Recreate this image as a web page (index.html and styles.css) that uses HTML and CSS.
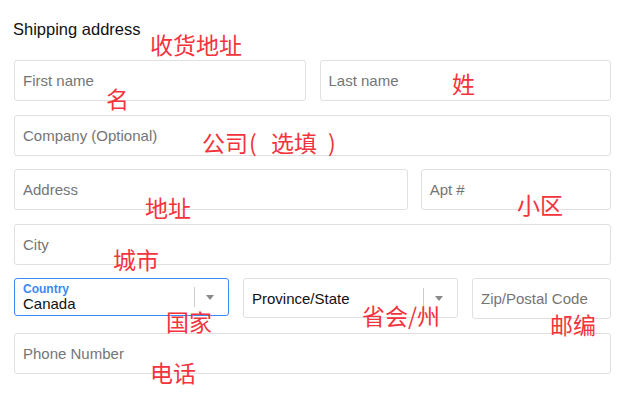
FILE: index.html
```html
<!DOCTYPE html>
<html lang="en">
<head>
    <meta charset="UTF-8">
    <meta name="viewport" content="width=device-width, initial-scale=1.0">
    <title>Shipping address</title>
    <link rel="stylesheet" href="styles.css">
</head>
<body>
    <div class="form">
        <h2 class="title">Shipping address</h2>

        <div class="row two">
            <div class="field">First name</div>
            <div class="field">Last name</div>
        </div>
        <div class="row">
            <div class="field">Company (Optional)</div>
        </div>
        <div class="row address">
            <div class="field">Address</div>
            <div class="field">Apt #</div>
        </div>
        <div class="row">
            <div class="field">City</div>
        </div>
        <div class="row region">
            <div class="select active">
                <div class="select-value">
                    <span class="select-label">Country</span>
                    <span>Canada</span>
                </div>
                <span class="sep"></span>
                <span class="arrow"></span>
            </div>
            <div class="select tall">
                <div class="select-value">
                    <span>Province/State</span>
                </div>
                <span class="sep"></span>
                <span class="arrow"></span>
            </div>
            <div class="field">Zip/Postal Code</div>
        </div>
        <div class="row">
            <div class="field">Phone Number</div>
        </div>

        <!-- notes written over the form -->
        <span class="note n-title">收货地址</span>
        <span class="note n-first">名</span>
        <span class="note n-last">姓</span>
        <span class="note n-company">公司<span class="paren open">(</span>选填<span class="paren close">)</span></span>
        <span class="note n-address">地址</span>
        <span class="note n-apt">小区</span>
        <span class="note n-city">城市</span>
        <span class="note n-country">国家</span>
        <span class="note n-province">省会/州</span>
        <span class="note n-zip">邮编</span>
        <span class="note n-phone">电话</span>
    </div>
</body>
</html>
```

FILE: styles.css
```css
*{
    padding: 0;
    margin: 0;
    box-sizing: border-box;
}

:root {
    --text-color: #111111;
    --hint-color: #757575;
    --border-color: #e0e0e0;
    --accent-color: #3b89f2;
    --note-color: #f4333c;
}

body {
    background-color: #ffffff;
    font-family: "Liberation Sans", Arial, sans-serif;
    font-size: 15px;
    color: var(--text-color);
}

.form {
    position: relative;
    width: 630px;
    height: 415px;
    padding: 20px 19px 0 14px;
}

.title {
    font-size: 16.5px;
    font-weight: normal;
    margin-left: -1px;
    height: 40px;
    line-height: 19px;
}

.row {
    display: grid;
    grid-template-columns: 1fr;
    gap: 14px;
    align-items: start;
    margin-bottom: 13.5px;
}

.row.two {
    grid-template-columns: 1fr 1fr;
}

.row.address {
    grid-template-columns: 393fr 190fr;
    gap: 13px;
}

.row.region {
    grid-template-columns: 215fr 215fr 139fr;
}

.field {
    height: 41px;
    border: 1px solid var(--border-color);
    border-radius: 3px;
    padding: 0 8px;
    display: flex;
    align-items: center;
    color: var(--hint-color);
    white-space: nowrap;
}

.select {
    height: 40px;
    border: 1px solid var(--border-color);
    border-radius: 3px;
    padding-left: 8px;
    display: flex;
    align-items: center;
}

.select.active {
    height: 38px;
    border-color: var(--accent-color);
}

.select-value {
    flex: 1;
    display: flex;
    flex-direction: column;
    line-height: 15px;
}

.select-label {
    color: var(--accent-color);
    font-size: 12px;
    font-weight: bold;
    line-height: 13px;
}

.sep {
    width: 1px;
    height: 20px;
    background-color: #cccccc;
}

.arrow {
    width: 0;
    height: 0;
    margin: 0 14px 0 11px;
    border-left: 4.5px solid transparent;
    border-right: 4.5px solid transparent;
    border-top: 5px solid #8a8a8a;
}

.note {
    position: absolute;
    color: var(--note-color);
    font-family: "Noto Sans CJK SC", sans-serif;
    font-size: 23px;
    line-height: 1;
    white-space: nowrap;
}

.paren {
    display: inline-block;
    width: 23px;
}

.paren.open {
    padding-left: 1px;
}

.paren.close {
    padding-left: 11px;
}

.n-title { left: 150px; top: 33px; }
.n-first { left: 106px; top: 87px; }
.n-last { left: 452px; top: 72px; }
.n-company { left: 202px; top: 131px; }
.n-address { left: 145px; top: 196px; }
.n-apt { left: 517px; top: 193px; }
.n-city { left: 113px; top: 248px; }
.n-country { left: 166px; top: 310px; }
.n-province { left: 362px; top: 304px; }
.n-zip { left: 550px; top: 313px; }
.n-phone { left: 150px; top: 361px; }
```
